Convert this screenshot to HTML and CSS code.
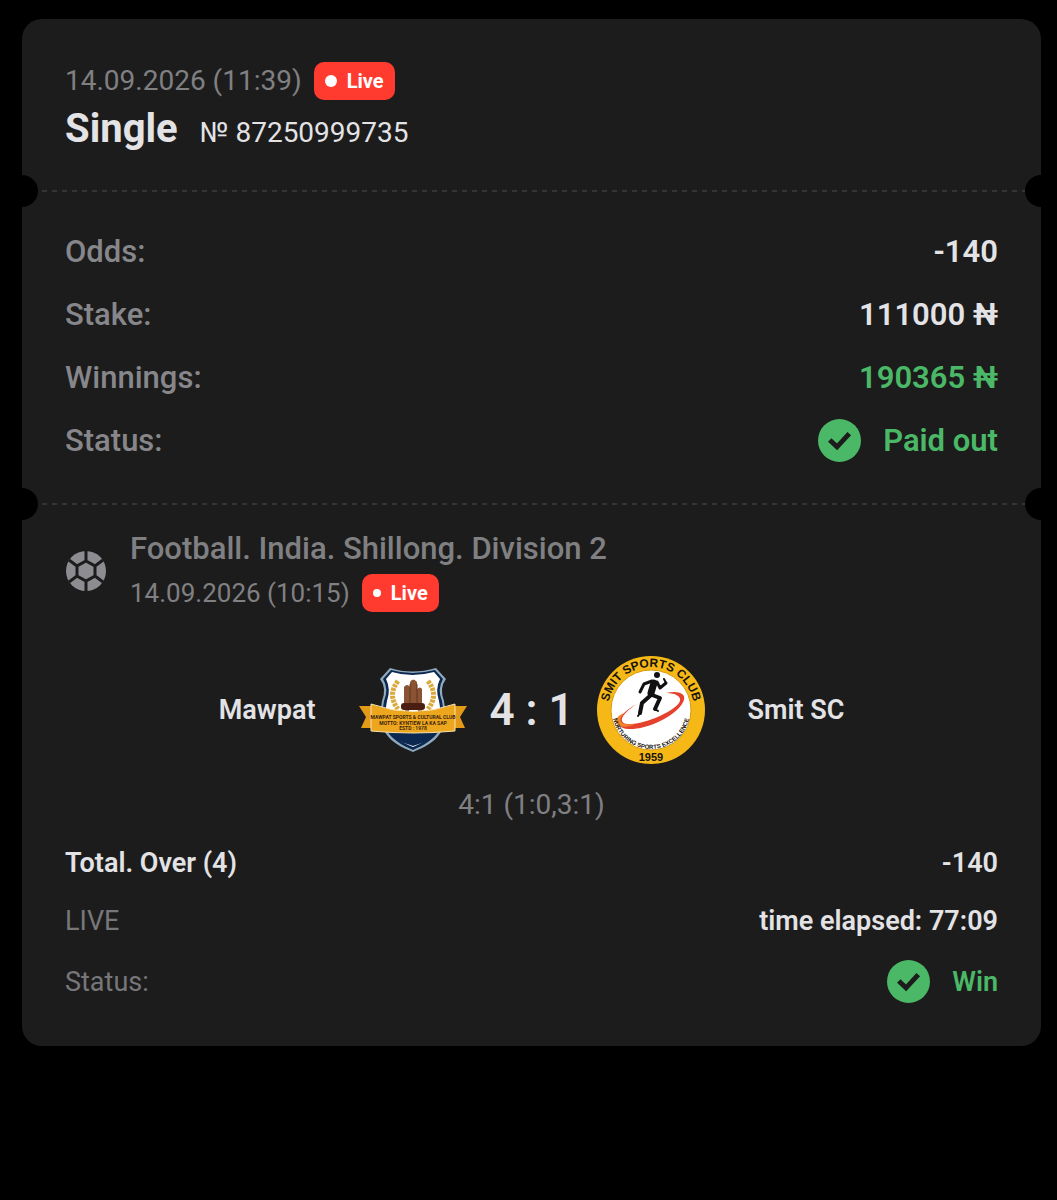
FILE: index.html
```html
<!DOCTYPE html>
<html lang="en">
    <head>
        <meta charset="utf-8">
        <meta name="viewport" content="width=device-width, initial-scale=1">
        <title>Bet slip</title>
        <link rel="stylesheet" href="styles.css">
    </head>
    <body>
        <main class="ticket">
            <header class="head">
                <div class="date-row">
                    <time class="date">14.09.2026 (11:39)</time>
                    <span class="live">Live</span>
                </div>
                <div class="title-row">
                    <h1>Single</h1>
                    <span class="number">№ 87250999735</span>
                </div>
            </header>

            <div class="tear"></div>

            <dl class="summary">
                <div class="row">
                    <dt>Odds:</dt>
                    <dd>-140</dd>
                </div>
                <div class="row">
                    <dt>Stake:</dt>
                    <dd>111000 ₦</dd>
                </div>
                <div class="row">
                    <dt>Winnings:</dt>
                    <dd class="green">190365 ₦</dd>
                </div>
                <div class="row">
                    <dt>Status:</dt>
                    <dd class="green">
                        <svg class="check" viewBox="0 0 44 44" aria-hidden="true">
                            <circle cx="22" cy="22" r="22"/>
                            <path d="M12 21.500l7.500 7L32 15"/>
                        </svg>
                        Paid out
                    </dd>
                </div>
            </dl>

            <div class="tear"></div>

            <section class="event">
                <div class="league">
                    <svg class="ball" viewBox="0 0 40 40" aria-hidden="true">
                        <circle class="ball-fill" cx="20" cy="20" r="20"/>
                        <path class="ball-seam" d="M20 10l9 5v10L20 30l-9-5V15zM20 10V0M20 30v10M29 15l8-6M11 15L3 9M29 25l8 6M11 25L3 31"/>
                    </svg>
                    <div class="league-text">
                        <h2>Football. India. Shillong. Division 2</h2>
                        <div class="date-row">
                            <time class="date">14.09.2026 (10:15)</time>
                            <span class="live small">Live</span>
                        </div>
                    </div>
                </div>

                <div class="match">
                    <div class="team home">
                        <span>Mawpat</span>
                        <svg class="logo" viewBox="0 0 108 108" aria-hidden="true">
                            <path fill="#8faabd" d="M31 12q22 7 46 0l10 11q-7 9-2 22c5 30-6 41-31 51-25-10-36-21-31-51q5-13-2-22z"/>
                            <path fill="#0d2850" d="M32 14q21 6 44 0l8 9q-6 10-1 22c5 28-6 39-29 49-23-10-34-21-29-49q5-12-1-22z"/>
                            <path fill="#fff" d="M33 16q20 6 42 0l6 7q-5 10-1 22c5 25-4 37-26 46-22-9-31-21-26-46q4-12-1-22z"/>
                            <path fill="#0d2850" d="M28 73h52q-7 12-26 17-19-5-26-17z"/>
                            <g fill="none" stroke="#d9a93c" stroke-width="5" stroke-dasharray="3 1">
                                <path d="M39 25q-11 14 0 28"/>
                                <path d="M69 25q11 14 0 28"/>
                            </g>
                            <path fill="#8a5434" d="M45 31q3-4 6 0v18h-6zM51 26q3-5 7 0v23h-7zM58 33q3-3 5 0v16h-5z"/>
                            <path fill="none" stroke="#5c3320" d="M51 28v20M58 28v20"/>
                            <rect fill="#4a1e13" x="42" y="47" width="24" height="7" rx="3"/>
                            <path fill="#4a1e13" d="M46 53h4v3h-4zM59 53h4v3h-4z"/>
                            <path fill="#e49a19" d="M0 50h15v22H2l5-11zM108 50H93v22h13l-5-11z"/>
                            <path fill="#8b5b12" d="M11 72h5v4zM97 72h-5v4z"/>
                            <path fill="#eda71f" stroke="#f6e2ad" stroke-width="1" d="M12 48q42 15 84 0v27q-42 4-84 0z"/>
                            <g class="logo-text" fill="#3d2410">
                                <text class="banner-text" x="54" y="63" font-size="5">MAWPAT SPORTS &amp; CULTURAL CLUB</text>
                                <text class="banner-text" x="54" y="69" font-size="5">MOTTO: KYNTIEW LA KA SAP</text>
                                <text class="banner-text" x="54" y="74" font-size="5">ESTD : 1978</text>
                            </g>
                        </svg>
                    </div>
                    <strong class="score">4 : 1</strong>
                    <div class="team away">
                        <svg class="logo" viewBox="0 0 108 108" aria-hidden="true">
                            <defs>
                                <path id="arc-top" d="M11 54a43 43 0 0 1 86 0"/>
                                <path id="arc-bottom" d="M15 54a39 39 0 0 0 78 0"/>
                            </defs>
                            <circle fill="#f5b817" cx="54" cy="54" r="54"/>
                            <circle fill="#fff" stroke="#d89b12" cx="54" cy="54" r="40"/>
                            <path fill="#e5422d" d="M69 37C82 34 92 38 85 48 76 62 48 74 31 73 16 72 19 59 40 48 21 60 21 69 34 68 51 67 75 56 82 47 86 41 79 37 69 37z"/>
                            <path fill="#f2842b" d="M27 57c-7 8-4 13 11 11-8 4-19 4-19-3 0-3 3-6 8-8z"/>
                            <g class="runner">
                                <circle cx="60" cy="19" r="3"/>
                                <path stroke-width="7" d="M57 27l-3 10"/>
                                <path stroke-width="3" d="M55 25l-8 3-4 8M60 26l3 6 6-5"/>
                                <path stroke-width="4" d="M55 39l8 3-5 11M54 39l-9 8-2 10"/>
                                <path stroke-width="2" d="M58 53l3 2M43 57l-2 3M69 27l-2-4"/>
                            </g>
                            <g class="logo-text" fill="#17130c">
                                <text font-size="12"><textPath href="#arc-top" startOffset="50%">SMIT SPORTS CLUB</textPath></text>
                                <text font-size="6"><textPath href="#arc-bottom" startOffset="50%">NURTURING SPORTS EXCELLENCE</textPath></text>
                                <text x="54" y="105" font-size="11">1959</text>
                            </g>
                        </svg>
                        <span>Smit SC</span>
                    </div>
                </div>
                <p class="periods">4:1 (1:0,3:1)</p>

                <dl class="details">
                    <div class="row">
                        <dt class="market">Total. Over (4)</dt>
                        <dd>-140</dd>
                    </div>
                    <div class="row">
                        <dt>LIVE</dt>
                        <dd>time elapsed: 77:09</dd>
                    </div>
                    <div class="row">
                        <dt>Status:</dt>
                        <dd class="green">
                            <svg class="check" viewBox="0 0 44 44" aria-hidden="true">
                                <circle cx="22" cy="22" r="22"/>
                                <path d="M12 21.500l7.500 7L32 15"/>
                            </svg>
                            Win
                        </dd>
                    </div>
                </dl>
            </section>
        </main>
    </body>
</html>
```

FILE: styles.css
```css
body {
    margin: 0;
    color: #e3e3e6;
    background-color: #000;
    font-family: Roboto, "Liberation Sans", sans-serif;
}
h1, h2, p, dl, dd {
    margin: 0;
}
.ticket {
    margin: 19px 16px 19px 22px;
    border-radius: 20px;
    background-color: #1c1c1c;
}
.head {
    padding: 43px 43px 28px;
}
.date-row {
    display: flex;
    align-items: center;
    gap: 12px;
}
.date {
    color: #808083;
    font-size: 28px;
    line-height: 38px;
}
.live {
    display: flex;
    align-items: center;
    gap: 10px;
    height: 38px;
    padding: 0 11px;
    box-sizing: border-box;
    border-radius: 10px;
    color: #fff;
    background-color: #ff3b30;
    font-size: 20px;
    font-weight: bold;
}
.live::before {
    content: "";
    width: 12px;
    height: 12px;
    border-radius: 50%;
    background-color: #fff;
}
.live.small::before {
    width: 8px;
    height: 8px;
}
.title-row {
    display: flex;
    align-items: baseline;
    gap: 22px;
    line-height: 58px;
}
h1 {
    font-size: 40px;
    font-weight: bold;
}
.number {
    font-size: 28px;
}

/* perforation between the ticket parts */
.tear {
    position: relative;
    height: 2px;
    background-image: repeating-linear-gradient(to right, #353535 0 5px, transparent 5px 10px);
}
.tear::before, .tear::after {
    content: "";
    position: absolute;
    top: -15px;
    width: 16px;
    height: 32px;
    background-color: #000;
}
.tear::before {
    left: 0;
    border-radius: 0 16px 16px 0;
}
.tear::after {
    right: 0;
    border-radius: 16px 0 0 16px;
}

.row {
    display: flex;
    align-items: center;
    justify-content: space-between;
}
.row dd {
    display: flex;
    align-items: center;
    gap: 22px;
    font-weight: 600;
}
.row .green {
    color: #4ab866;
}
.summary {
    padding: 28px 43px 31px;
    font-size: 31px;
}
.summary .row {
    height: 63px;
}
.summary dt {
    color: #87878b;
    font-weight: 500;
}
.check {
    width: 43px;
    height: 43px;
}
.check circle {
    fill: #4ab866;
}
.check path {
    fill: none;
    stroke: #1c1c1c;
    stroke-width: 5;
}

.event {
    padding: 25px 43px 33px;
}
.league {
    display: flex;
    align-items: center;
    gap: 23px;
}
.ball {
    flex: none;
    width: 40px;
    height: 40px;
    padding: 0 1px;
}
.ball-fill {
    fill: #8c8c91;
}
.ball-seam {
    fill: none;
    stroke: #1c1c1c;
    stroke-width: 3;
}
h2 {
    color: #808083;
    font-size: 31px;
    font-weight: 500;
    line-height: 38px;
}
.league .date-row {
    margin-top: 6px;
}
.league .date {
    font-size: 26px;
}
.match {
    display: flex;
    align-items: center;
    margin-top: 44px;
}
.team {
    display: flex;
    flex: 1;
    align-items: center;
    gap: 43px;
    font-size: 27px;
    font-weight: 600;
}
.home {
    justify-content: flex-end;
}
.logo {
    width: 108px;
    height: 108px;
}
.logo-text {
    font-family: "Liberation Sans", sans-serif;
    font-weight: bold;
    text-anchor: middle;
}
.banner-text {
    font-family: "Liberation Sans Narrow", Roboto, sans-serif;
}
.runner {
    fill: #111;
}
.runner path {
    fill: none;
    stroke: #111;
    stroke-linecap: round;
    stroke-linejoin: round;
}
.score {
    width: 130px;
    font-size: 44px;
    font-weight: 600;
    text-align: center;
}
.periods {
    margin-top: 22px;
    color: #808083;
    font-size: 28px;
    line-height: 38px;
    text-align: center;
}
.details {
    margin-top: 10px;
    font-size: 27px;
}
.details .row {
    height: 58px;
}
.details .row:last-child {
    height: 63px;
}
.details dt {
    color: #77777a;
}
.details .market {
    color: #e3e3e6;
    font-weight: 600;
}
```
